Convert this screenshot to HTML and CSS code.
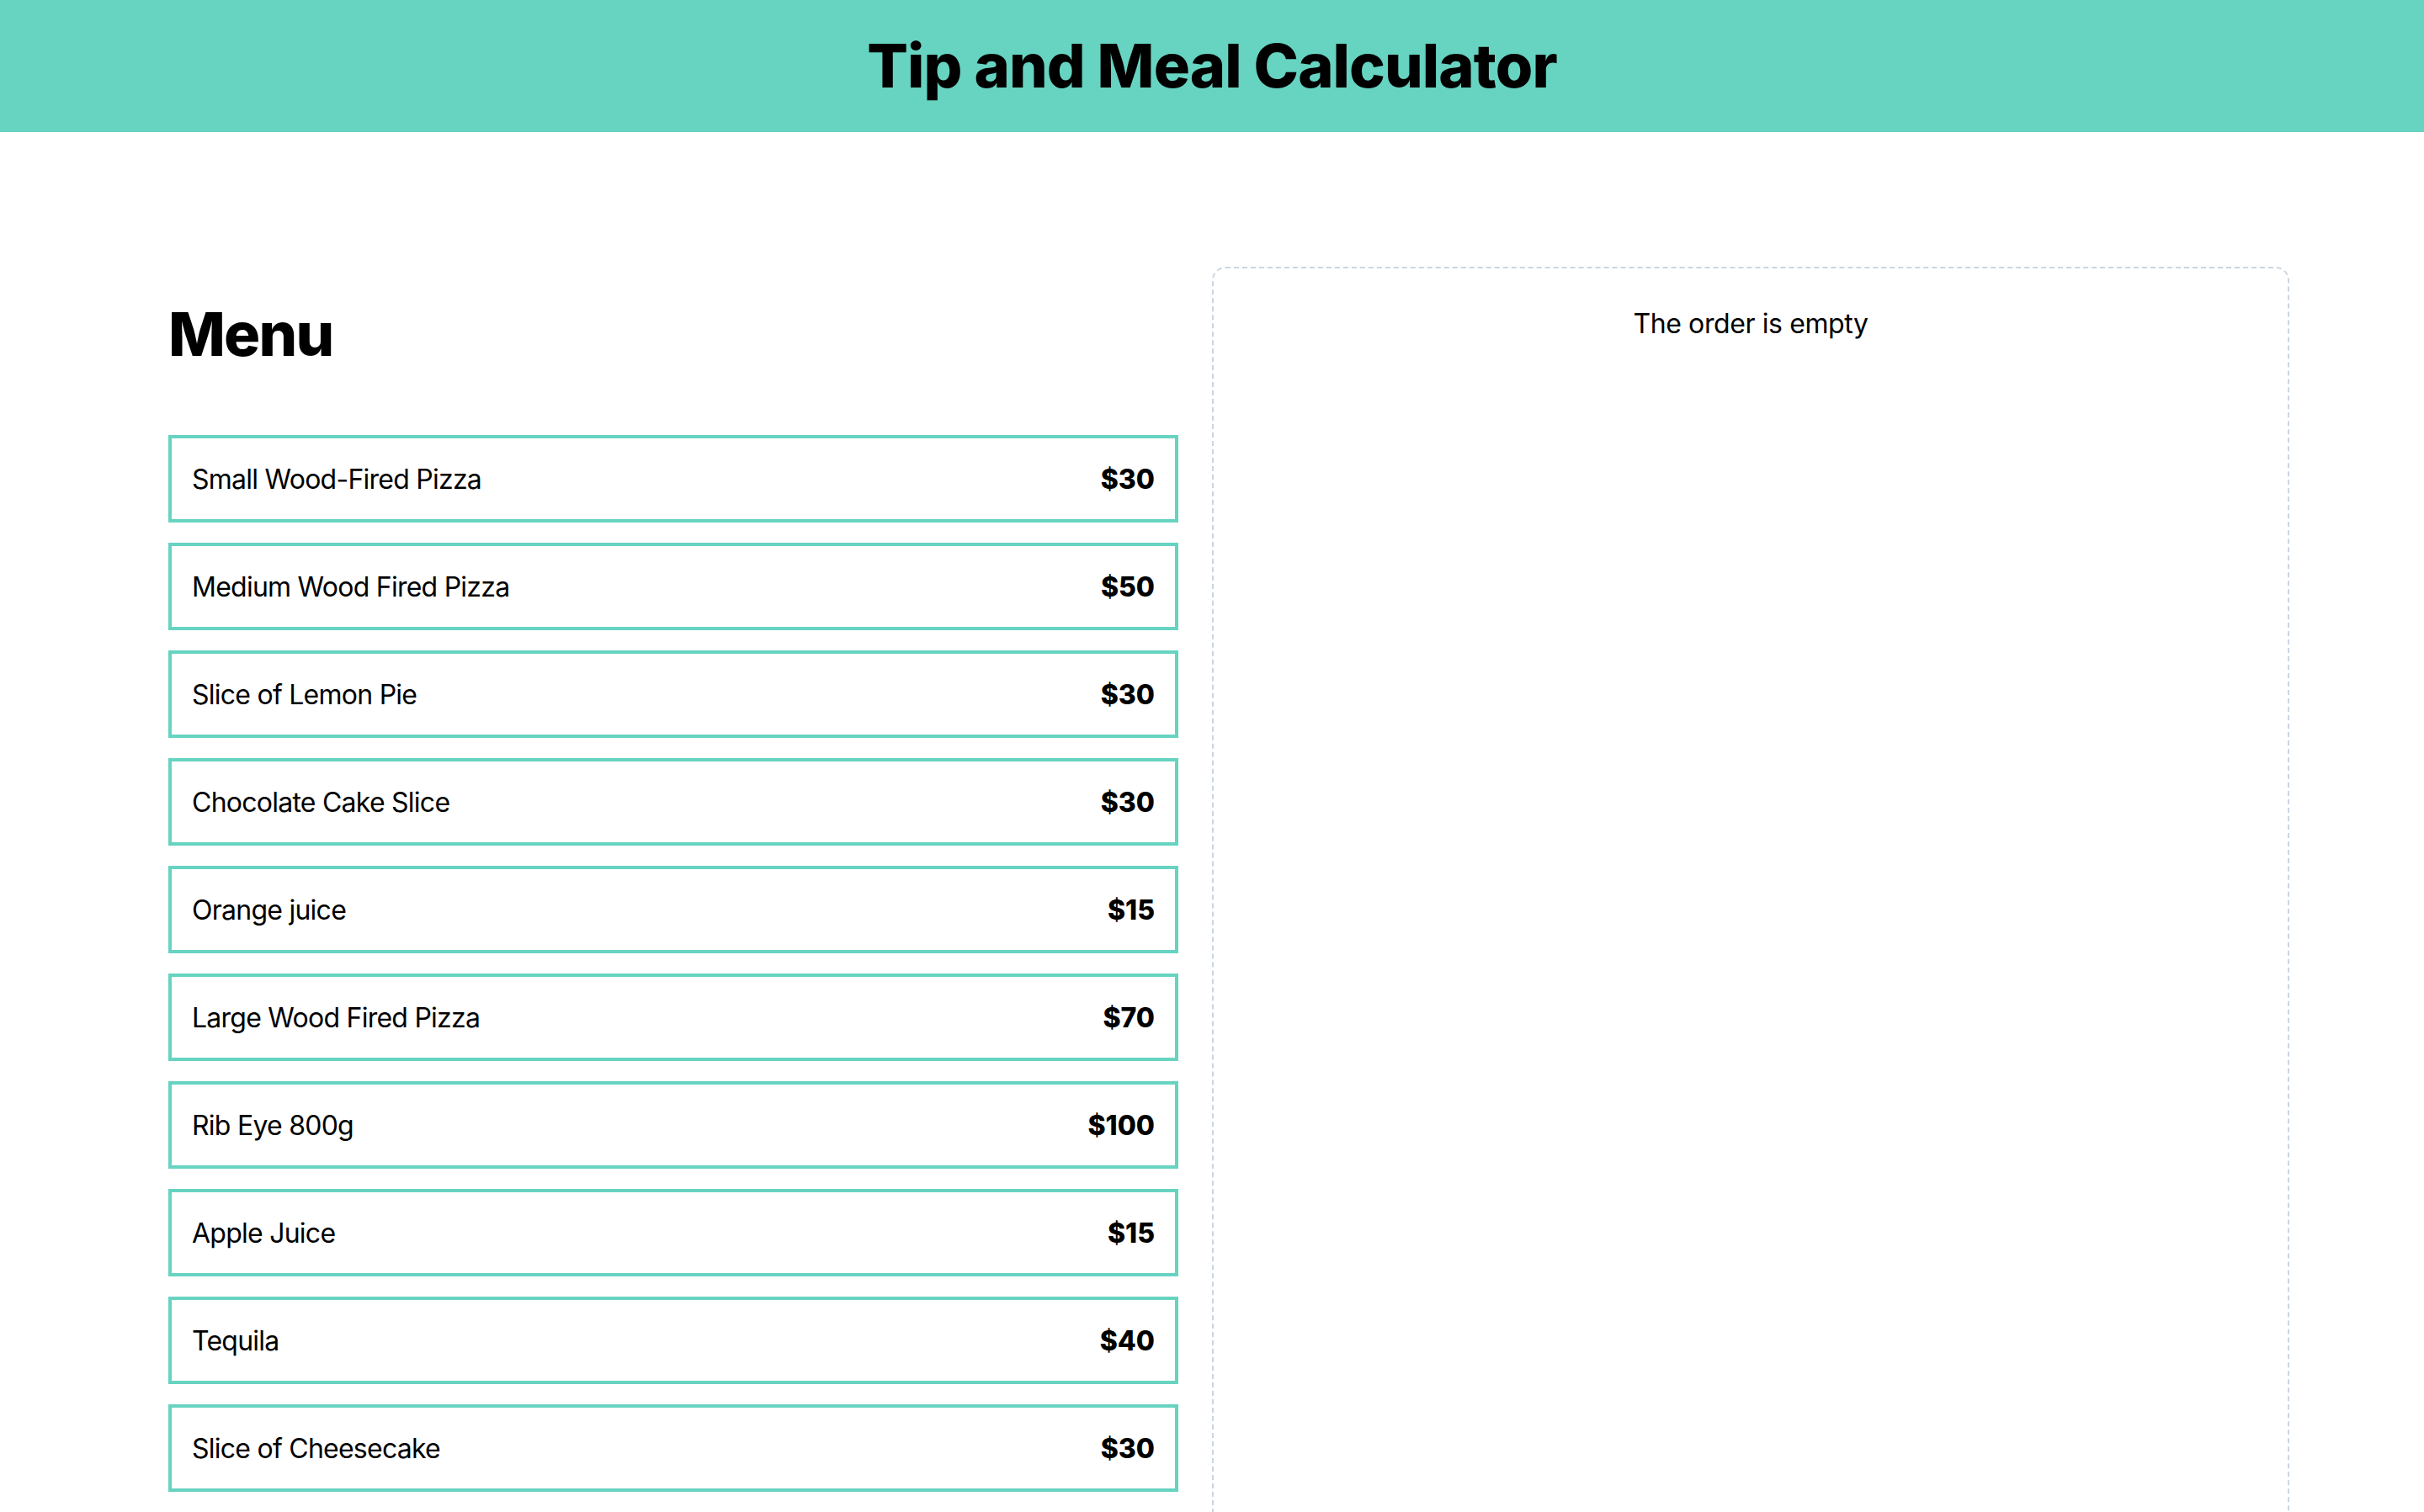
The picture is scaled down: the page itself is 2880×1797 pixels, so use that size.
FILE: index.html
```html
<!DOCTYPE html>
<html lang="en">
<head>
<meta charset="utf-8">
<title>Tip and Meal Calculator</title>
<link rel="stylesheet" href="styles.css">
</head>
<body>
  <header class="topbar">
    <h1 class="app-title">Tip and Meal Calculator</h1>
  </header>
  <main class="layout">
    <section class="menu">
      <h2 class="menu-title">Menu</h2>
      <ul class="menu-list">
        <li class="menu-item"><span class="item-name">Small Wood-Fired Pizza</span><span class="item-price">$30</span></li>
        <li class="menu-item"><span class="item-name">Medium Wood Fired Pizza</span><span class="item-price">$50</span></li>
        <li class="menu-item"><span class="item-name">Slice of Lemon Pie</span><span class="item-price">$30</span></li>
        <li class="menu-item"><span class="item-name">Chocolate Cake Slice</span><span class="item-price">$30</span></li>
        <li class="menu-item"><span class="item-name">Orange juice</span><span class="item-price">$15</span></li>
        <li class="menu-item"><span class="item-name">Large Wood Fired Pizza</span><span class="item-price">$70</span></li>
        <li class="menu-item"><span class="item-name">Rib Eye 800g</span><span class="item-price">$100</span></li>
        <li class="menu-item"><span class="item-name">Apple Juice</span><span class="item-price">$15</span></li>
        <li class="menu-item"><span class="item-name">Tequila</span><span class="item-price">$40</span></li>
        <li class="menu-item"><span class="item-name">Slice of Cheesecake</span><span class="item-price">$30</span></li>
      </ul>
    </section>
    <section class="order">
      <p class="order-empty">The order is empty</p>
    </section>
  </main>
</body>
</html>
```

FILE: styles.css
```css
* {
  box-sizing: border-box;
}

html, body {
  margin: 0;
  padding: 0;
  background: #ffffff;
  color: #000000;
  font-family: Inter, "Noto Sans", "Liberation Sans", sans-serif;
}

.topbar {
  background: #67d3c1;
  padding: 38px 0 39px;
}

.app-title {
  margin: 0;
  text-align: center;
  font-size: 72px;
  line-height: 80px;
  font-weight: 800;
  letter-spacing: -0.9px;
}

.layout {
  max-width: 2560px;
  margin: 0 auto;
  padding-top: 160px;
  display: grid;
  grid-template-columns: 1fr 1fr;
  align-items: stretch;
}

.menu {
  padding: 40px;
}

.menu-title {
  margin: 0 0 80px;
  font-size: 72px;
  line-height: 80px;
  font-weight: 800;
  letter-spacing: -1.8px;
}

.menu-list {
  list-style: none;
  margin: 0;
  padding: 0;
  display: flex;
  flex-direction: column;
  gap: 24px;
}

.menu-item {
  display: flex;
  justify-content: space-between;
  align-items: center;
  border: 4px solid #67d3c1;
  padding: 25px 24px 23px;
  font-size: 32px;
  line-height: 48px;
}

.item-name {
  letter-spacing: -0.75px;
}

.item-price {
  font-weight: 800;
}

.order {
  border: 2px dashed #cbd5e1;
  border-radius: 16px;
  padding: 42px 40px 40px;
  min-height: 1600px;
}

.order-empty {
  margin: 0;
  text-align: center;
  font-size: 32px;
  line-height: 48px;
  letter-spacing: -0.4px;
}
```
